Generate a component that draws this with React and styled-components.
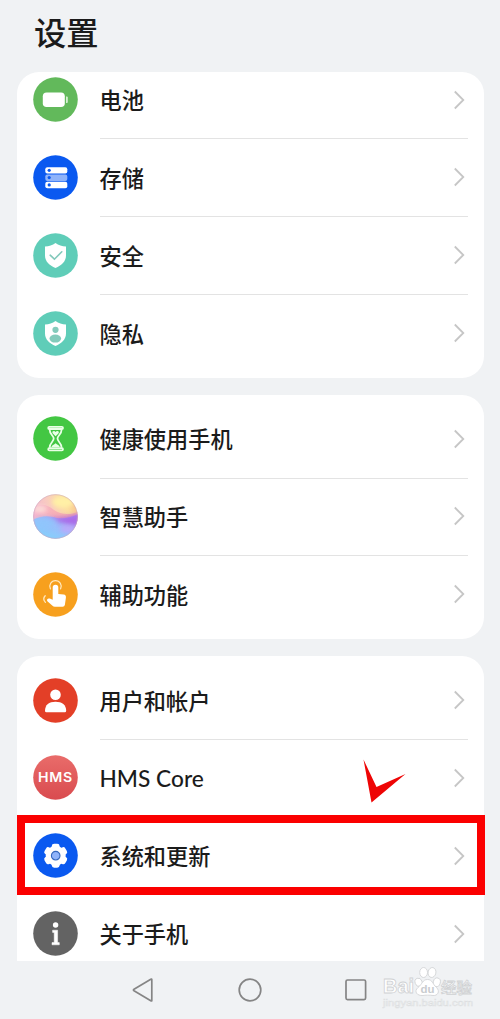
import React from 'react'
import styled, { createGlobalStyle } from 'styled-components'

const GlobalStyle = createGlobalStyle`
  * {
    box-sizing: border-box;
  }

  body {
    margin: 0;
    background-color: #f0f2f4;
    font-family: 'Noto Sans CJK SC', sans-serif;
    color: #1b1b1b;
  }
`

const Phone = styled.div`
  position: relative;
  width: 500px;
  height: 1019px;
  overflow: hidden;
  display: flex;
  flex-direction: column;
`

const Title = styled.h1`
  flex: none;
  height: 72px;
  margin: 0;
  padding: 7px 0 0 34px;
  font-size: 32.3px;
  line-height: 48px;
  font-weight: 500;
`

const List = styled.main`
  flex: none;
  height: 889px;
  padding: 0 16.5px;
  overflow: hidden;
  display: flex;
  flex-direction: column;
  gap: 17px;
`

const Card = styled.section`
  flex: none;
  height: ${({ $height }) => $height}px;
  padding: 5.2px 16px 0;
  border-radius: ${({ $open }) => ($open ? '22px 22px 0 0' : '22px')};
  background-color: #ffffff;
  overflow: hidden;
`

const Row = styled.div`
  display: grid;
  grid-template-columns: 45px 1fr;
  column-gap: 22px;
  align-items: center;
  height: 77.85px;
  margin-top: ${({ $shift }) => $shift || 0}px;
`

const IconBox = styled.div`
  height: 45px;

  svg {
    display: block;
  }
`

const RowBody = styled.div`
  height: 78.85px;
  display: flex;
  align-items: center;
  justify-content: space-between;
  margin-bottom: -1px;
  border-bottom: 1px solid ${({ $line }) => ($line ? '#e3e3e3' : 'transparent')};

  svg {
    margin-right: 3px;
  }
`

const Label = styled.span`
  font-family: ${({ $latin }) => ($latin ? "Lato, 'Noto Sans CJK SC'" : "'Noto Sans CJK SC'")}, sans-serif;
  font-size: ${({ $latin }) => ($latin ? 22.7 : 22.2)}px;
  font-weight: 500;
  line-height: 32px;
  padding-bottom: ${({ $latin }) => ($latin ? 0 : 1)}px;
  padding-top: ${({ $latin }) => ($latin ? 3 : 0)}px;
  white-space: nowrap;
`

const Highlight = styled.div`
  position: absolute;
  left: 16.5px;
  top: 815px;
  width: 468px;
  height: 80px;
  border: 8px solid #fb0000;
`

const Tick = styled.svg`
  position: absolute;
  left: 360px;
  top: 756px;
`

const NavBar = styled.nav`
  flex: 1;
  display: flex;
  align-items: center;
  padding-left: 131px;
  gap: 82px;

  svg {
    display: block;
  }
`

const Watermark = styled.svg`
  position: absolute;
  left: 376px;
  top: 958px;
`

const Disc = ({ color, children }) => (
  <svg width="45" height="45" viewBox="0 0 45 45">
    <circle cx="22.5" cy="22.5" r="22.3" fill={color} />
    {children}
  </svg>
)

const SHIELD =
  'M22.5 10 C25.5 12.3 29 13.4 33 13.6 V22.5 C33 28.5 28.5 32.3 22.5 35 C16.5 32.3 12 28.5 12 22.5 V13.6 C16 13.4 19.5 12.3 22.5 10Z'

const BatteryIcon = () => (
  <Disc color="#62b95b">
    <rect x="9.8" y="15.5" width="22" height="14.5" rx="3.8" fill="#fff" />
    <path d="M33 19.5 h.8 a1 1 0 0 1 1 1 v4.6 a1 1 0 0 1 -1 1 h-.8z" fill="#d5f0d2" />
  </Disc>
)

const StorageIcon = () => (
  <Disc color="#0a59f0">
    <rect x="12.3" y="12.2" width="22" height="6.4" rx="2" fill="#fff" />
    <rect x="12.3" y="19.4" width="22" height="6.6" rx="2" fill="#8fb3fa" />
    <rect x="12.3" y="26.8" width="22" height="6.4" rx="2" fill="#fff" />
    <g fill="#0a59f0">
      <circle cx="16.2" cy="15.3" r="1.6" />
      <circle cx="16.2" cy="22.6" r="1.6" />
      <circle cx="16.2" cy="29.9" r="1.6" />
    </g>
  </Disc>
)

const SecurityIcon = () => (
  <Disc color="#5fcdb8">
    <path d={SHIELD} fill="#fff" />
    <path d="M17.2 22.2 L21.4 26.2 L28.8 18.8" fill="none" stroke="#83c9bb" strokeWidth="1.6" strokeLinecap="round" />
  </Disc>
)

const PrivacyIcon = () => (
  <Disc color="#5fcdb8">
    <path d={SHIELD} fill="#fff" />
    <circle cx="22.5" cy="18.8" r="3.1" fill="#83cbbb" />
    <ellipse cx="22.3" cy="27.6" rx="5.8" ry="4" fill="#83cbbb" />
  </Disc>
)

const HourglassIcon = () => (
  <Disc color="#43c743">
    <g fill="none" stroke="#e9ffe6" strokeWidth="1.8" strokeLinejoin="round">
      <rect x="15.2" y="10.8" width="14.8" height="2.2" rx="1.1" />
      <rect x="15.2" y="32.2" width="14.8" height="2.2" rx="1.1" />
      <path d="M16.6 13.4 C16.6 18.5 20.7 19.5 20.7 22.6 S16.6 26.7 16.6 31.8 M28.6 13.4 C28.6 18.5 24.5 19.5 24.5 22.6 S28.6 26.7 28.6 31.8" />
    </g>
    <path d="M22.6 20.3 L19.6 17.2 C18.5 15.2 21.3 14.2 22.6 16 C23.9 14.2 26.7 15.2 25.6 17.2Z M18.4 31 C19 28.8 21 29 22.6 27.3 C24.2 29 26.2 28.8 26.8 31Z" fill="#e9ffe6" />
  </Disc>
)

const AssistantIcon = () => (
  <svg width="45" height="45" viewBox="0 0 45 45">
    <defs>
      <clipPath id="orb">
        <circle cx="22.5" cy="22.5" r="22.2" />
      </clipPath>
      <filter id="orbSoft" x="-30%" y="-30%" width="160%" height="160%">
        <feGaussianBlur stdDeviation="2" />
      </filter>
      <linearGradient id="orbTop" x1="0" y1=".6" x2="1" y2=".2">
        <stop offset="0" stopColor="#f2b3d6" />
        <stop offset=".45" stopColor="#f9cdbf" />
        <stop offset=".75" stopColor="#fbdd9f" />
        <stop offset="1" stopColor="#f9c08b" />
      </linearGradient>
      <linearGradient id="orbMid" x1="0" y1="0" x2="1" y2="0">
        <stop offset="0" stopColor="#f7b6cf" />
        <stop offset=".5" stopColor="#f7a9b4" />
        <stop offset="1" stopColor="#f5a3a6" />
      </linearGradient>
      <linearGradient id="orbLow" x1=".2" y1="1" x2=".9" y2="0">
        <stop offset="0" stopColor="#7fd3fb" />
        <stop offset=".5" stopColor="#9cbdfb" />
        <stop offset="1" stopColor="#b78df0" />
      </linearGradient>
    </defs>
    <g clipPath="url(#orb)">
      <rect width="45" height="45" fill="url(#orbTop)" />
      <ellipse cx="30" cy="8" rx="11" ry="6" fill="#fff0a6" filter="url(#orbSoft)" />
      <path d="M0 13 C8 9 15 11 21 16 C28 21 37 21 45 18 V34 H0Z" fill="url(#orbMid)" opacity=".8" />
      <ellipse cx="7" cy="15" rx="7" ry="3.5" fill="#fde6dc" filter="url(#orbSoft)" opacity=".8" />
      <path d="M0 26 C8 21 17 21.5 24 24 C32 25 39 23 45 20 V45 H0Z" fill="url(#orbLow)" />
      <path d="M16 22.5 C28 25 36 22 46 20 V31 C38 33 26 28 16 22.5Z" fill="#a960e6" filter="url(#orbSoft)" opacity=".8" />
      <path d="M0 27 C9 21 18 24 24 28 C19 34 8 36 0 36Z" fill="#8ec6fc" filter="url(#orbSoft)" opacity=".8" />
      <ellipse cx="35" cy="35" rx="8" ry="4" fill="#c0a4fa" filter="url(#orbSoft)" opacity=".8" />
    </g>
    <circle cx="22.5" cy="22.5" r="21.9" fill="none" stroke="#c5a6c0" strokeWidth=".7" opacity=".7" />
  </svg>
)

const TouchIcon = () => (
  <Disc color="#f7a01e">
    <path
      d="M19.7 15.5 a2.8 2.8 0 0 1 5.6 0 V22 L30.6 22.6 C32.4 22.9 33.2 24 32.9 25.8 L31.9 32.8 Q31.6 34.8 29.6 34.8 H22 Q20.4 34.8 19.2 33.6 L14.4 29.2 C13.2 27.4 15 25.8 16.8 26.6 L19.7 27.8Z"
      fill="#fff"
    />
    <g fill="none" stroke="#ffe7bd" strokeWidth="1.3" strokeLinecap="round">
      <path d="M17.4 16.8 A5.7 5.7 0 1 1 27.6 16.8" />
      <path d="M12.2 23.8 Q9.2 27 12.4 30.4" />
    </g>
  </Disc>
)

const UserIcon = () => (
  <Disc color="#e33f27">
    <circle cx="22.5" cy="16.7" r="5.3" fill="#fff" />
    <path d="M12 32.8 C12 27 16 23.8 22.5 23.8 S33.2 27 33.2 32.8 Q33.2 34.3 31.8 34.3 H13.4 Q12 34.3 12 32.8Z" fill="#fff" />
  </Disc>
)

const HmsIcon = () => (
  <Disc color="url(#hms)">
    <defs>
      <linearGradient id="hms" x1="0" y1="0" x2="0" y2="1">
        <stop offset="0" stopColor="#e96c6a" />
        <stop offset="1" stopColor="#d94b4f" />
      </linearGradient>
    </defs>
    <text
      x="5"
      y="27.2"
      textLength="35"
      lengthAdjust="spacingAndGlyphs"
      letterSpacing=".7"
      fontFamily="Inter, sans-serif"
      fontWeight="600"
      fontSize="13.2"
      fill="#fff"
    >
      HMS
    </text>
  </Disc>
)

const GearIcon = () => (
  <Disc color="#0a59f0">
    <g fill="#fff" transform="translate(22.7 22.7)">
      <circle r="10" />
      {[0, 60, 120, 180, 240, 300].map(angle => (
        <rect key={angle} x="-3.9" y="-12" width="7.8" height="8" rx="2.4" transform={`rotate(${angle})`} />
      ))}
      <circle r="4.3" fill="#8fb3fa" stroke="#3467bd" strokeWidth="1.1" />
    </g>
  </Disc>
)

const InfoIcon = () => (
  <Disc color="#636363">
    <circle cx="22.6" cy="14" r="2.7" fill="#fff" />
    <path d="M19.6 19.2 H24.6 V31.6 H26.3 V33.8 H19 V31.6 H21.2 V21.4 H19.6Z" fill="#fff" stroke="#fff" strokeWidth=".5" strokeLinejoin="round" />
  </Disc>
)

const Chevron = () => (
  <svg width="12" height="20" viewBox="0 0 12 20">
    <path d="M1.8 1.5 L10.3 10 L1.8 18.5" fill="none" stroke="#c6c6c6" strokeWidth="1.8" />
  </svg>
)

const groups = [
  {
    height: 305.5,
    shift: -16.6,
    items: [
      { label: '电池', Icon: BatteryIcon, line: true },
      { label: '存储', Icon: StorageIcon, line: true },
      { label: '安全', Icon: SecurityIcon, line: true },
      { label: '隐私', Icon: PrivacyIcon },
    ],
  },
  {
    height: 244.5,
    items: [
      { label: '健康使用手机', Icon: HourglassIcon, line: true },
      { label: '智慧助手', Icon: AssistantIcon, line: true },
      { label: '辅助功能', Icon: TouchIcon },
    ],
  },
  {
    height: 330,
    open: true,
    items: [
      { label: '用户和帐户', Icon: UserIcon, line: true },
      { label: 'HMS Core', Icon: HmsIcon, latin: true },
      { label: '系统和更新', Icon: GearIcon },
      { label: '关于手机', Icon: InfoIcon },
    ],
  },
]

const App = () => {
  return (
    <>
      <GlobalStyle />
      <Phone>
        <Title>设置</Title>
        <List>
          {groups.map((group, i) => (
            <Card key={i} $height={group.height} $open={group.open}>
              {group.items.map(({ label, Icon, line, latin }, j) => (
                <Row key={label} $shift={j === 0 ? group.shift : 0}>
                  <IconBox>
                    <Icon />
                  </IconBox>
                  <RowBody $line={line}>
                    <Label $latin={latin}>{label}</Label>
                    <Chevron />
                  </RowBody>
                </Row>
              ))}
            </Card>
          ))}
        </List>
        <NavBar>
          <svg width="24" height="26" viewBox="0 0 24 26">
            <path d="M20.8 2.6 V23.4 Q20.8 24.4 19.8 23.8 L3 13.8 Q1.8 13 3 12.2 L19.8 2.2 Q20.8 1.6 20.8 2.6Z" fill="none" stroke="#858585" strokeWidth="1.7" strokeLinejoin="round" />
          </svg>
          <svg width="26" height="26" viewBox="0 0 26 26">
            <circle cx="13" cy="13" r="10.8" fill="none" stroke="#858585" strokeWidth="1.7" />
          </svg>
          <svg width="22" height="22" viewBox="0 0 22 22">
            <rect x="1" y="1" width="19.6" height="19.6" rx="1.5" fill="none" stroke="#858585" strokeWidth="1.7" />
          </svg>
        </NavBar>
        <Highlight />
        <Tick width="48" height="50" viewBox="0 0 48 50">
          <path d="M3.5 3.5 L16.5 31 L45.5 18 L11.5 46.5Z" fill="#ee0505" />
        </Tick>
        {/* baidu jingyan watermark */}
        <Watermark width="110" height="56" viewBox="0 0 110 56">
          <g fill="#fff" stroke="#cfd1d3" strokeWidth=".8">
            <text x="7" y="34.5" textLength="31" lengthAdjust="spacingAndGlyphs" fontFamily="Liberation Sans, sans-serif" fontWeight="700" fontSize="20">
              Bai
            </text>
            <ellipse cx="42.6" cy="24.3" rx="3.5" ry="4.2" transform="rotate(-20 42.6 24.3)" />
            <ellipse cx="47.6" cy="14.5" rx="3.9" ry="5" />
            <ellipse cx="56" cy="14.5" rx="3.9" ry="5" transform="rotate(10 56 14.5)" />
            <ellipse cx="60.8" cy="24.3" rx="3.5" ry="4.4" transform="rotate(15 60.8 24.3)" />
            <path d="M51.5 21.5 C56.5 21.5 56.5 26 60.5 29.5 C64.5 33.5 61.5 38 57 37.5 C54 37 49 37 47 37.5 C41 38 37.5 33.5 42 29.5 C46.5 26 46.5 21.5 51.5 21.5Z" />
            <text x="65" y="34.8" textLength="31" lengthAdjust="spacingAndGlyphs" fontFamily="Noto Sans CJK SC, sans-serif" fontWeight="500" fontSize="14.5">
              经验
            </text>
            <text x="7" y="48" textLength="90" lengthAdjust="spacingAndGlyphs" fontFamily="Liberation Sans, sans-serif" fontSize="9.5" fill="#f7f8f9" stroke="#dcdee0" strokeWidth=".5">
              jingyan.baidu.com
            </text>
          </g>
          <text x="44.5" y="35.2" textLength="14" lengthAdjust="spacingAndGlyphs" fontFamily="Liberation Sans, sans-serif" fontWeight="700" fontSize="11.5" fill="#c9cccf">
            du
          </text>
        </Watermark>
      </Phone>
    </>
  )
}

export default App
